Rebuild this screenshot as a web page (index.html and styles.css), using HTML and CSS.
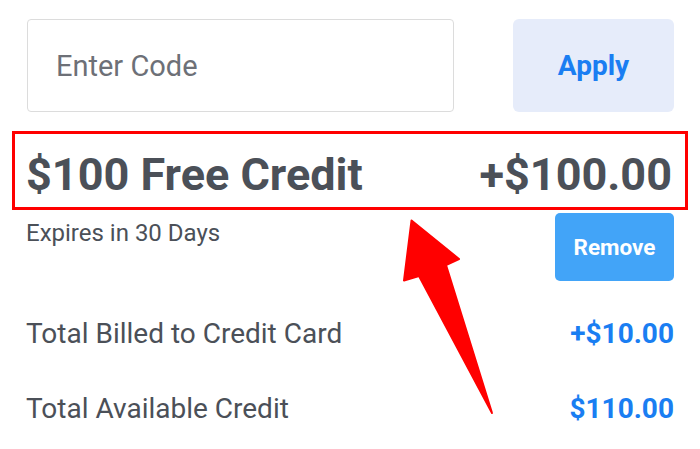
FILE: index.html
```html
<!DOCTYPE html>
<html lang="en">
<head>
  <meta charset="UTF-8">
  <meta name="viewport" content="width=device-width, initial-scale=1.0">
  <title>Promo Code</title>
  <link rel="stylesheet" href="styles.css">
</head>
<body>
  <div class="page">
    <div class="code-row">
      <input type="text" class="code-input" placeholder="Enter Code">
      <button class="apply">Apply</button>
    </div>

    <div class="credit-head">
      <span>$100 Free Credit</span>
      <span>+$100.00</span>
    </div>

    <div class="credit-sub">
      <span class="expires">Expires in 30 Days</span>
      <button class="remove">Remove</button>
    </div>

    <div class="totals">
      <div class="total-row">
        <span>Total Billed to Credit Card</span>
        <span class="amount">+$10.00</span>
      </div>
      <div class="total-row">
        <span>Total Available Credit</span>
        <span class="amount">$110.00</span>
      </div>
    </div>

    <svg class="arrow" width="700" height="449" viewBox="0 0 700 449">
      <path d="M411.5 220.5 L459 259 L446 265 L492 413 L419 276 L404 280.5 Z" fill="#ff0000" stroke="#ff0000" stroke-width="2" stroke-linejoin="round"/>
    </svg>
  </div>
</body>
</html>
```

FILE: styles.css
```css
* {
  box-sizing: border-box;
  font-family: Roboto, "Liberation Sans", sans-serif;
}
body {
  margin: 0;
  background: #fff;
  color: #4b5058;
}
.page {
  position: relative;
  width: 700px;
  height: 449px;
  padding: 19px 26px 0 26px;
}
.code-row {
  display: flex;
  justify-content: space-between;
}
.code-input {
  width: 427px;
  height: 93px;
  margin-left: 1px;
  padding: 0 0 0 28px;
  border: 1px solid #dcdcdc;
  border-radius: 4px;
  font-size: 29px;
  color: #4b5058;
  outline: none;
}
.code-input::placeholder {
  color: #6d7077;
}
.apply {
  width: 161px;
  height: 93px;
  border: none;
  border-radius: 6px;
  background: #e6ecfa;
  color: #1a7ef2;
  font-size: 28px;
  font-weight: bold;
}
.credit-head {
  display: flex;
  justify-content: space-between;
  margin: 19px -14px 0 -14px;
  border: 3px solid #ff0000;
  padding: 15px 13px 6px 11px;
  font-size: 45px;
  line-height: 52px;
  font-weight: bold;
}
.credit-sub {
  display: flex;
  justify-content: space-between;
  align-items: flex-start;
}
.expires {
  padding-top: 10px;
  font-size: 24px;
  line-height: 26px;
}
.remove {
  width: 119px;
  height: 68px;
  margin-top: 3px;
  border: none;
  border-radius: 5px;
  background: #42a4f8;
  color: #fff;
  font-size: 22.5px;
  font-weight: bold;
}
.totals {
  margin-top: 15px;
}
.total-row {
  display: flex;
  justify-content: space-between;
  font-size: 28px;
  line-height: 75px;
}
.amount {
  color: #1a7ef2;
  font-weight: bold;
}
.arrow {
  position: absolute;
  left: 0;
  top: 0;
  pointer-events: none;
}
```
